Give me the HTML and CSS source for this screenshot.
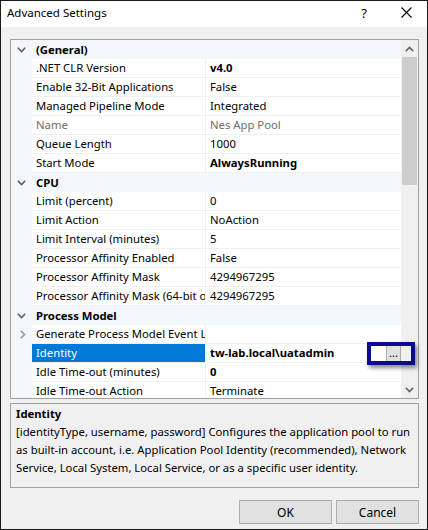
FILE: index.html
```
<!DOCTYPE html>
<html>
<head>
<meta charset="utf-8">
<link rel="stylesheet" href="styles.css">
</head>
<body>
<div class="window">
  <div class="titlebar">
    <span class="title">Advanced Settings</span>
    <span class="help">?</span>
    <span class="close"><svg width="11" height="11" viewBox="0 0 11 11"><path d="M0.5 0.5L10.5 10.5M10.5 0.5L0.5 10.5" stroke="#000" stroke-width="1.1" fill="none"/></svg></span>
  </div>
  <div class="content">
    <div class="gridbox">
      <div class="rows">
        <div class="cat"><span class="gut"><svg width="9" height="6" viewBox="0 0 9 6"><path d="M0.8 0.8L4.5 4.5L8.2 0.8" stroke="#5f5f5f" stroke-width="1.6" fill="none"/></svg></span><span class="catname">(General)</span></div>
        <div class="row"><span class="gut"></span><span class="name">.NET CLR Version</span><span class="val b">v4.0</span></div>
        <div class="row"><span class="gut"></span><span class="name">Enable 32-Bit Applications</span><span class="val">False</span></div>
        <div class="row"><span class="gut"></span><span class="name">Managed Pipeline Mode</span><span class="val">Integrated</span></div>
        <div class="row dim"><span class="gut"></span><span class="name">Name</span><span class="val">Nes App Pool</span></div>
        <div class="row"><span class="gut"></span><span class="name">Queue Length</span><span class="val">1000</span></div>
        <div class="row"><span class="gut"></span><span class="name">Start Mode</span><span class="val b">AlwaysRunning</span></div>
        <div class="cat"><span class="gut"><svg width="9" height="6" viewBox="0 0 9 6"><path d="M0.8 0.8L4.5 4.5L8.2 0.8" stroke="#5f5f5f" stroke-width="1.6" fill="none"/></svg></span><span class="catname">CPU</span></div>
        <div class="row"><span class="gut"></span><span class="name">Limit (percent)</span><span class="val">0</span></div>
        <div class="row"><span class="gut"></span><span class="name">Limit Action</span><span class="val">NoAction</span></div>
        <div class="row"><span class="gut"></span><span class="name">Limit Interval (minutes)</span><span class="val">5</span></div>
        <div class="row"><span class="gut"></span><span class="name">Processor Affinity Enabled</span><span class="val">False</span></div>
        <div class="row"><span class="gut"></span><span class="name">Processor Affinity Mask</span><span class="val">4294967295</span></div>
        <div class="row"><span class="gut"></span><span class="name">Processor Affinity Mask (64-bit option)</span><span class="val">4294967295</span></div>
        <div class="cat"><span class="gut"><svg width="9" height="6" viewBox="0 0 9 6"><path d="M0.8 0.8L4.5 4.5L8.2 0.8" stroke="#5f5f5f" stroke-width="1.6" fill="none"/></svg></span><span class="catname">Process Model</span></div>
        <div class="row"><span class="gut"><svg width="6" height="9" viewBox="0 0 6 9"><path d="M0.8 0.8L4.5 4.5L0.8 8.2" stroke="#9a9a9a" stroke-width="1.6" fill="none"/></svg></span><span class="name">Generate Process Model Event Log Entry</span><span class="val"></span></div>
        <div class="row sel"><span class="gut"></span><span class="name">Identity</span><span class="val b"><span class="valtext">tw-lab.local\uatadmin</span><span class="dots">...</span></span></div>
        <div class="row"><span class="gut"></span><span class="name">Idle Time-out (minutes)</span><span class="val b">0</span></div>
        <div class="row"><span class="gut"></span><span class="name">Idle Time-out Action</span><span class="val">Terminate</span></div>
      </div>
      <div class="scrollbar">
        <div class="arrow"><svg width="9" height="6" viewBox="0 0 9 6"><path d="M0.8 5.2L4.5 1.5L8.2 5.2" stroke="#606060" stroke-width="1.6" fill="none"/></svg></div>
        <div class="track"><div class="thumb"></div></div>
        <div class="arrow"><svg width="9" height="6" viewBox="0 0 9 6"><path d="M0.8 0.8L4.5 4.5L8.2 0.8" stroke="#606060" stroke-width="1.6" fill="none"/></svg></div>
      </div>
    </div>
    <div class="desc">
      <div class="desctitle">Identity</div>
      <div class="desctext">[identityType, username, password] Configures the application pool to run<br>as built-in account, i.e. Application Pool Identity (recommended), Network<br>Service, Local System, Local Service, or as a specific user identity.</div>
    </div>
    <div class="buttons">
      <button class="btn ok">OK</button>
      <button class="btn cancel">Cancel</button>
    </div>
  </div>
  <div class="highlight"></div>
</div>
</body>
</html>
```
FILE: styles.css
```
html, body { margin: 0; padding: 0; }
body { font-family: "Noto Sans", "Open Sans", sans-serif; font-size: 11.3px; color: #000; }
.window {
  position: relative;
  width: 428px; height: 530px; box-sizing: border-box;
  border: 1px solid #1a1a1a; background: #f0f0f0;
  display: flex; flex-direction: column;
}
.titlebar {
  height: 26px; box-sizing: border-box; background: #fff; display: flex; align-items: center;
  padding-left: 6px; padding-bottom: 3px; flex: none;
}
.title { flex: 1; font-size: 11.5px; }
.help { width: 14px; margin-right: 30px; font-size: 13px; text-align: center; }
.close { width: 11px; margin-right: 15px; display: flex; }
.content { padding: 12px 8px 0 9px; display: flex; flex-direction: column; }
.gridbox {
  height: 360px; box-sizing: border-box; border: 1px solid #a0a0a0;
  display: flex; background: #fff;
}
.rows { flex: 1; overflow: hidden; background: #f3f6fb; }
.row, .cat { height: 19px; display: flex; align-items: stretch; line-height: 18px; }
.gut { width: 21px; flex: none; display: flex; align-items: center; justify-content: center; padding-left: 2px; box-sizing: border-box; }
.cat .gut { padding-left: 0; }
.catname { font-weight: bold; padding-left: 4px; line-height: 19px; }
.name {
  width: 173px; flex: none; background: #fff; padding-left: 4px; box-sizing: border-box;
  white-space: nowrap; overflow: hidden; border-bottom: 1px solid #f0f0f0;
}
.val {
  flex: 1; background: #fff; padding-left: 4px; white-space: nowrap; overflow: hidden;
  border-left: 1px solid #f0f0f0; border-bottom: 1px solid #f0f0f0; display: flex;
}
.b { font-weight: bold; }
.dim .name, .dim .val { color: #6d6d6d; }
.sel .name { background: #0078d7; color: #fff; }
.valtext { flex: 1; }
.dots {
  width: 15px; height: 17px; align-self: center; box-sizing: border-box;
  border: 1px solid #adadad; background: #e1e1e1; font-weight: normal; font-size: 11px;
  line-height: 13px; text-align: center; color: #000;
}
.scrollbar { width: 17px; flex: none; background: #f0f0f0; display: flex; flex-direction: column; }
.arrow { height: 17px; display: flex; align-items: center; justify-content: center; flex: none; }
.track { flex: 1; padding: 0 1px; }
.thumb { height: 128px; background: #cdcdcd; }
.desc {
  margin-top: 4px; height: 85px; box-sizing: border-box; border: 1px solid #a0a0a0;
  background: #f0f0f0; padding: 1px 5px 0 5px; line-height: 18px;
}
.desctitle { font-weight: bold; }
.desctext { white-space: nowrap; }
.buttons { margin-top: 12px; display: flex; justify-content: flex-end; gap: 4px; }
.btn {
  height: 24px; box-sizing: border-box; border: 1px solid #adadad; background: #e1e1e1;
  font-family: inherit; font-size: 12px; color: #000; padding: 0;
}
.ok { width: 93px; }
.cancel { width: 83px; }
.highlight {
  position: absolute; left: 366px; top: 341px; width: 48px; height: 23px; box-sizing: border-box;
  border: 4px solid #0b0b8c; box-shadow: 2px 3px 4px rgba(0,0,0,0.45);
}
```
